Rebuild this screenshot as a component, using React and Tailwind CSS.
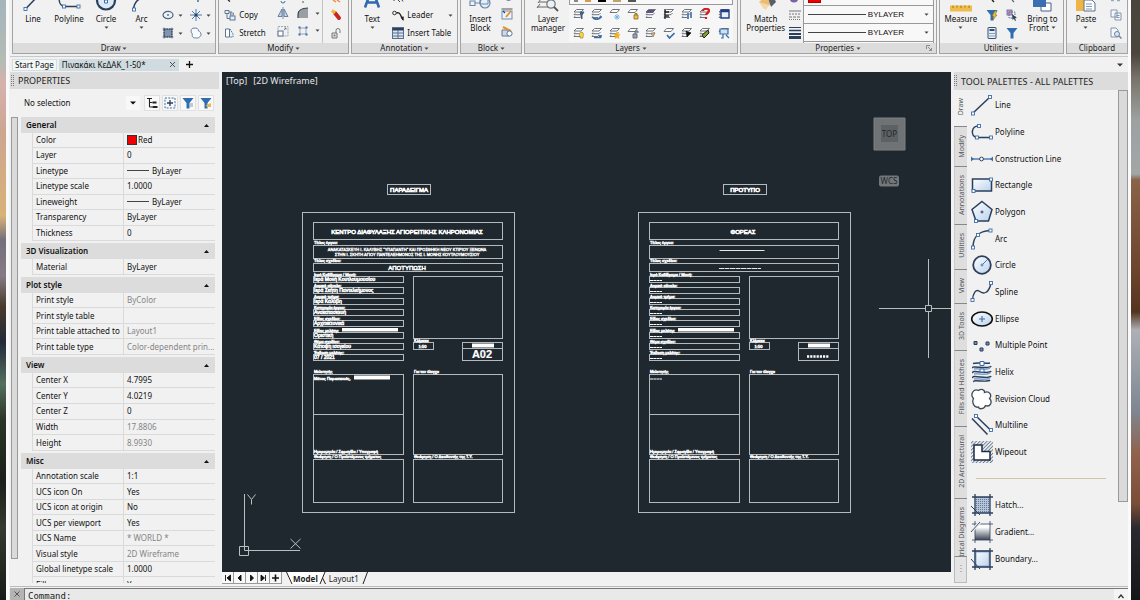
import React from 'react';

/* ---------- small shared pieces ---------- */

const NAVY = '#2b3f5c';
const BLUE = '#3b6ea8';

function Svg({ w, h, box, className = '', children }) {
  return (
    <svg width={w} height={h} viewBox={box || `0 0 ${w} ${h}`} className={`shrink-0 ${className}`} fill="none" aria-hidden="true">
      {children}
    </svg>
  );
}

function Caret({ className = '' }) {
  return (
    <Svg w={5} h={3} className={className}>
      <path d="M0.5 0.5h4L2.5 2.7z" fill="#444" />
    </Svg>
  );
}

function Handle({ x, y, s = 3 }) {
  return <rect x={x - s / 2} y={y - s / 2} width={s} height={s} fill="#fff" stroke={BLUE} strokeWidth="0.9" />;
}

function Panel({ title, caret = true, launcher = false, children }) {
  return (
    <section className="flex min-w-0 flex-col border border-t-0 border-[#a3a3a3] bg-[#f1f1f1]">
      <div className="flex min-h-0 flex-1 overflow-hidden">{children}</div>
      <button type="button" className="relative flex h-[10px] items-center justify-center gap-0.5 bg-[#dcdcdc] text-[8px] leading-[10px] text-[#222]">
        {title}
        {caret && <Caret />}
        {launcher && (
          <Svg w={6} h={6} className="absolute right-1 top-0.5">
            <path d="M0.5 4V0.5H4M2 2l3 3M5.5 3v2.5H3" stroke="#777" strokeWidth="0.8" />
          </Svg>
        )}
      </button>
    </section>
  );
}

function Big({ label, label2, caret, inlineCaret, className = '', children }) {
  return (
    <button type="button" className={`flex shrink-0 flex-col items-center text-[8px] leading-[9px] text-[#111] ${className}`}>
      <span className="flex h-[14px] items-start">{children}</span>
      <span className="whitespace-nowrap">{label}</span>
      {label2 && (
        <span className="flex items-center gap-0.5 whitespace-nowrap">
          {label2}
          {inlineCaret && <Caret />}
        </span>
      )}
      {caret && <Caret className="mt-[3px]" />}
    </button>
  );
}

function Tool({ name, children, className = '' }) {
  return (
    <button type="button" aria-label={name} className={`flex shrink-0 items-center justify-center ${className}`}>
      {children}
    </button>
  );
}

/* ---------- ribbon ---------- */

function DrawPanel() {
  return (
    <Panel title="Draw">
      <Big label="Line" className="w-[38px] pl-0.5">
        <Svg w={24} h={12}>
          <path d="M5 8.5L16 -3" stroke={NAVY} strokeWidth="1.5" />
          <Handle x={4.5} y={9} />
        </Svg>
      </Big>
      <Big label="Polyline" className="w-[36px]">
        <Svg w={26} h={12}>
          <path d="M3 -2C3 4 6 6.5 9 6.5H22" stroke={NAVY} strokeWidth="1.4" />
          <Handle x={8} y={6.5} />
          <Handle x={22.5} y={6.5} />
        </Svg>
      </Big>
      <Big label="Circle" caret className="w-[38px]">
        <Svg w={24} h={12}>
          <circle cx="12" cy="0.5" r="9" fill="#dbe8f6" stroke={NAVY} strokeWidth="2.2" />
          <path d="M10.5 0h3v3h-3z" fill="#fff" stroke={BLUE} />
        </Svg>
      </Big>
      <Big label="Arc" caret className="w-[33px]">
        <Svg w={20} h={12}>
          <path d="M1.5 9C2 5 4 1 7.5 -1" stroke={NAVY} strokeWidth="1.5" />
          <Handle x={2} y={9.5} />
        </Svg>
      </Big>
      <div className="grid flex-1 grid-cols-2 grid-rows-[6px_18px_18px] items-center">
        <span />
        <Svg w={6} h={4} className="ml-2 self-start">
          <path d="M2 1h2" stroke={BLUE} strokeWidth="1.5" />
        </Svg>
        <Tool name="Ellipse" className="gap-1">
          <Svg w={12} h={10}>
            <ellipse cx="6" cy="5" rx="5" ry="3.6" stroke="#4a6687" strokeWidth="1.2" />
            <circle cx="6" cy="5" r="0.9" fill={BLUE} />
          </Svg>
          <Caret />
        </Tool>
        <Tool name="Point" className="gap-1">
          <Svg w={12} h={12}>
            <path d="M6 0v12M0 6h12M2 2l8 8M10 2l-8 8" stroke={BLUE} strokeWidth="0.9" />
            <circle cx="6" cy="6" r="1.6" fill={NAVY} />
          </Svg>
          <Caret />
        </Tool>
        <Tool name="Hatch" className="gap-1">
          <Svg w={12} h={12}>
            <rect x="2" y="2" width="8" height="8" fill="#8295ad" stroke={NAVY} strokeDasharray="1.5 1" />
            <path d="M0.5 2h11M0.5 10h11M2 0.5v11M10 0.5v11" stroke={NAVY} strokeWidth="0.6" />
          </Svg>
          <Caret />
        </Tool>
        <Tool name="Revision cloud" className="gap-1">
          <Svg w={12} h={12}>
            <path d="M2.500 7C0 5 1 0.800 4 1.200C7 0.500 8.500 2 8.500 4C11.500 5 11.800 9 9.500 10C8 11.500 6 11 5.500 10.800C3 11.500 1.500 9 2.500 7Z" fill="#f8fafc" stroke="#6380a6" strokeWidth="1" />
          </Svg>
          <Caret />
        </Tool>
      </div>
    </Panel>
  );
}

function ModifyPanel() {
  return (
    <Panel title="Modify">
      <div className="grid w-[52px] shrink-0 grid-rows-[6px_18px_18px] text-[8px] leading-[10px] text-[#111]">
        <Svg w={8} h={3} className="ml-2">
          <path d="M1 0l2 1.500" stroke="#222" strokeWidth="1.2" />
        </Svg>
        <button type="button" className="flex items-center gap-[3px] pl-[5px]">
          <Svg w={12} h={12}>
            <path d="M1 1.500h4v3H1zM5 3h3M3 4.500v5h3" stroke="#5c7692" strokeWidth="1" />
            <rect x="6" y="7" width="5" height="4" fill="#e6eef8" stroke="#5c7692" />
            <rect x="6.500" y="4" width="3" height="2" stroke="#5c7692" strokeWidth="0.8" />
          </Svg>
          Copy
        </button>
        <button type="button" className="flex items-center gap-[3px] pl-[5px]">
          <Svg w={12} h={10}>
            <path d="M1.500 1h4v8h-4z" fill="#fff" stroke="#5c7692" />
            <path d="M6 1l3 5v3H6" stroke={BLUE} strokeDasharray="1.5 1" />
          </Svg>
          Stretch
        </button>
      </div>
      <div className="ml-0.5 grid w-[50px] shrink-0 grid-cols-[20px_20px_8px] grid-rows-[4px_18px_17px] items-center justify-items-center border-r border-[#c4c4c4]">
        <Svg w={6} h={3}><circle cx="3" cy="0" r="2" stroke={BLUE} /></Svg>
        <Svg w={6} h={3}><path d="M3 0v2" stroke="#555" /></Svg>
        <span />
        <Tool name="Mirror">
          <Svg w={12} h={12}>
            <path d="M5 2v7.500H1zM7 2v7.500h4z" fill="#c7d5e6" stroke="#61778f" strokeWidth="0.9" />
            <path d="M6 0v12" stroke={BLUE} strokeWidth="0.7" />
          </Svg>
        </Tool>
        <Tool name="Fillet">
          <Svg w={12} h={12}>
            <path d="M1 11V8C1 3 4 1 11 1V11Z" fill="#9a9fa5" />
            <path d="M1 11V8C1 3 4 1 11 1" stroke="#444" strokeWidth="1.2" />
          </Svg>
        </Tool>
        <Caret />
        <Tool name="Scale">
          <Svg w={12} h={12}>
            <rect x="1" y="1.500" width="10" height="9.500" stroke="#7f95ae" strokeWidth="0.8" strokeDasharray="2 1" />
            <rect x="1" y="6" width="5" height="5" fill="#fff" stroke="#5a6f88" />
            <path d="M7 5l2-2M7.500 3H9v1.500" stroke="#556" strokeWidth="0.7" />
          </Svg>
        </Tool>
        <Tool name="Array">
          <Svg w={12} h={12}>
            <path d="M3 3h6v6H3z" stroke="#8095b0" strokeWidth="0.8" />
            <path d="M1.500 1.500h2v2h-2zM8.500 1.500h2v2h-2zM1.500 8.500h2v2h-2zM8.500 8.500h2v2h-2z" fill={BLUE} />
          </Svg>
        </Tool>
        <Caret />
      </div>
      <div className="grid flex-1 grid-rows-[6px_18px_18px] items-center justify-items-center">
        <Svg w={12} h={4} className="self-start"><path d="M3 0l3 2M7 0l3 2" stroke="#ee8a3c" strokeWidth="1.4" /></Svg>
        <Tool name="Erase">
          <Svg w={12} h={12}>
            <path d="M5 4l4 5" stroke="#c8261d" strokeWidth="4" strokeLinecap="round" />
            <path d="M2 1.500l3 2.500" stroke="#f3b43a" strokeWidth="3.200" />
          </Svg>
        </Tool>
        <Tool name="Explode">
          <Svg w={12} h={12}>
            <path d="M2 6h5v5H2z" fill="#e2e2e2" stroke="#777" />
            <path d="M6 6V3.500a2 2 0 0 1 4 0V6" stroke="#777" />
            <circle cx="4.500" cy="8.500" r="1" fill="#777" />
          </Svg>
        </Tool>
      </div>
    </Panel>
  );
}

function AnnotationPanel() {
  return (
    <Panel title="Annotation">
      <Big label="Text" caret className="w-[40px]">
        <Svg w={18} h={8} box="0 0 18 8">
          <path d="M2 7.500L6.500 -5M16 7.500L11.500 -5M4 2.500h10" stroke="#2f69b1" strokeWidth="2.600" />
        </Svg>
      </Big>
      <div className="grid flex-1 grid-rows-[6px_18px_18px] text-[8px] leading-[10px] text-[#111]">
        <Svg w={14} h={3} className="ml-px"><path d="M1 0v1M5 0l2 2M9 0l1 1.500" stroke="#444" /></Svg>
        <div className="flex items-center justify-between pr-1">
          <button type="button" className="flex items-center gap-[3px]">
            <Svg w={12} h={11}>
              <circle cx="2.500" cy="3" r="1.800" stroke="#333" />
              <path d="M4.500 3C8 2 8 4 9 6L11 10" stroke="#222" strokeWidth="1.400" />
              <path d="M8.500 7L11.500 11L11.800 6.500Z" fill="#222" />
            </Svg>
            Leader
          </button>
          <Caret />
        </div>
        <button type="button" className="flex items-center gap-[3px] whitespace-nowrap">
          <Svg w={12} h={12}>
            <rect x="0.500" y="0.500" width="11" height="11" fill="#dbe6f3" stroke="#56708d" />
            <path d="M0.500 1h11v2.500H0.500z" fill={NAVY} />
            <path d="M0.500 6h11M0.500 9h11M6 3v8" stroke="#56708d" />
          </Svg>
          Insert Table
        </button>
      </div>
    </Panel>
  );
}

function BlockPanel() {
  return (
    <Panel title="Block">
      <Big label="Insert" label2="Block" className="w-[38px]">
        <Svg w={24} h={10}>
          <path d="M2 1h5v4.500H2zM7 3h6" stroke="#6a87ab" strokeWidth="1.100" />
          <circle cx="17" cy="3" r="5" fill="#e6eef8" stroke="#6a87ab" strokeWidth="1.200" />
          <path d="M12 -1h8v5h-8z" stroke="#6a87ab" />
        </Svg>
      </Big>
      <div className="grid flex-1 grid-rows-[5px_17px_17px] items-center justify-items-start pl-0.5">
        <Svg w={8} h={3} className="ml-1 self-start"><path d="M1 0a3 2 0 0 0 5 0" fill="#8a7aa0" /></Svg>
        <Tool name="Edit block">
          <Svg w={12} h={12}>
            <rect x="1" y="3" width="10" height="8" fill="#eef4fb" stroke="#6c8db5" />
            <path d="M0.500 1h11" stroke="#555" /><path d="M5 9l5-6" stroke="#e58f2c" strokeWidth="1.800" />
            <path d="M2 3l2 2" stroke="#27436b" strokeWidth="1.300" />
          </Svg>
        </Tool>
        <Tool name="Block attributes">
          <Svg w={12} h={12}>
            <path d="M1 5h7v6H1z" fill="#cfd8e4" stroke="#66788f" />
            <path d="M2 2l8 4" stroke="#e58f2c" strokeWidth="2" />
            <circle cx="8.500" cy="8.500" r="2.600" fill="#fff" stroke="#4d77ad" />
          </Svg>
        </Tool>
      </div>
    </Panel>
  );
}

const LAYER_TOOLS = [
  ['Freeze object layer', <path d="M7 4h4l-2 3v4l-1-1V7z" fill="#44607f" stroke="#44607f" />],
  ['Layer previous', <path d="M2 10c3 2 6 1 8-1l-1-1" stroke={BLUE} strokeWidth="1.800" />],
  ['Layer freeze', <path d="M8 6v6M5 9h6M6 7l4 4M10 7l-4 4" stroke="#6bb1e8" strokeWidth="0.9" />, true],
  ['Layer lock', <path d="M7 7h4v4H7zM8 7V5.500h2V7" fill="#f0bf4c" stroke="#8e6a1b" strokeWidth="0.8" />, true],
  ['Layer isolate', <path d="M3 2h7l-2 3H1z" fill="#5c5182" />],
  ['Layer walk', <path d="M2 1v10M2 4h4M2 8h4" stroke="#222" strokeWidth="1.300" />],
  ['Layer match', <path d="M6 5h2v6H6zM9 4h2v6H9z" fill="#5f86b5" />],
  ['Layer query', <path d="M4 3c0-3 6-3 6 0c0 2-3 2-3 4M7 9v2" stroke="#d81f1f" strokeWidth="2.200" />],
  ['Layer states', <path d="M3 2h8v8H3zM3 3.500h8" fill="#e8effa" stroke="#1f3c86" strokeWidth="1.400" />],
  ['Layer on', <path d="M8 5a2.500 2.500 0 0 1 2 4v2H7V9a2.500 2.500 0 0 1 1-4z" fill="#f7d64c" stroke="#a5872a" strokeWidth="0.7" />],
  ['Copy to layer', <path d="M3 10.500h7M10 10.500L7.500 8M10 10.500V8" stroke={BLUE} strokeWidth="1.600" />],
  ['Layer thaw', <path d="M8 5l1 2 2 .5-1.500 1.500.5 2.500-2-1-2 1 .5-2.500L5 7.500 7 7z" fill="#f2b21f" stroke="#f2b21f" strokeWidth="0.6" />],
  ['Layer unlock', <path d="M6 7h4v4H6zM8 7V4h3v2" fill="#9aa4b4" stroke="#5c6678" strokeWidth="0.9" />, true],
  ['Layer merge', <path d="M6 6h4l-2 4z" fill="#d6b88d" stroke="#887050" strokeWidth="0.700" />],
  ['Make current', <path d="M4 8l2.500 3 5-5" stroke={BLUE} strokeWidth="1.700" />, true],
  ['Layer off', <path d="M5 4l5 2-4 4z" fill="#111" stroke="#111" strokeWidth="0.6" />],
  ['Layer delete', <path d="M3 8l6-5 1 3-5 5z" fill="#7fa32e" stroke="#222" strokeWidth="1" />],
  ['Layer viewport', <path d="M2 2h8v5H2zM8 8l3 3M5 7v4H3" fill="#cfe0f3" stroke={BLUE} strokeWidth="1.200" />, true],
];

function LayersPanel() {
  return (
    <Panel title="Layers">
      <Big label="Layer" label2="manager" className="w-[44px] pl-px">
        <Svg w={24} h={12}>
          <path d="M3 2h12M1 7h11M5 -1L2 3M4 4L1 8" stroke="#666" strokeWidth="1" />
          <circle cx="15" cy="4" r="4.200" fill="#e9f1fa" stroke="#777" strokeWidth="1.200" />
          <path d="M18 7l4 4" stroke="#555" strokeWidth="1.800" />
        </Svg>
      </Big>
      <div className="mr-1 flex flex-1 flex-col">
        <div className="flex h-[5px] shrink-0 items-start gap-[7px] border border-t-0 border-[#999] bg-[#f8f8f8] pl-1">
          <span className="h-0.5 w-1 bg-[#888]" />
          <span className="h-0.5 w-1.5 bg-[#d99a4a]" />
          <span className="h-0.5 w-2 bg-black" />
          <span className="h-0.5 w-2 bg-[#bfa36a]" />
          <span className="h-0.5 w-2 bg-[#555]" />
        </div>
        <div className="grid h-[37px] grid-cols-9 grid-rows-2 items-center justify-items-center bg-[#f6f6f6]">
          {LAYER_TOOLS.map(([name, mark, single]) => (
            <Tool key={name} name={name}>
              <Svg w={12} h={12}>
                <path
                  d={single ? 'M3.500 1.500h7L8 4.500H1z' : 'M3.500 1.500h7L8 4H1zM2 5.500L1 6.700h7L9.500 5M2 8.200L1 9.500h6'}
                  fill="#fff"
                  stroke="#5f656d"
                  strokeWidth="0.900"
                />
                {mark}
              </Svg>
            </Tool>
          ))}
        </div>
      </div>
    </Panel>
  );
}

function LineSelect({ name }) {
  return (
    <div className="flex h-[18px] items-center border-b border-[#999] pl-1 pr-1">
      <span className="mr-0.5 h-px flex-1 bg-[#444]" />
      <select aria-label={name} className="h-3.5 w-14 appearance-none bg-transparent font-['Liberation_Sans',sans-serif] text-[8px] leading-[14px] text-[#111]">
        <option>BYLAYER</option>
      </select>
      <Caret />
    </div>
  );
}

function PropertiesPanel() {
  return (
    <Panel title="Properties" launcher>
      <Big label="Match" label2="Properties" className="w-[48px] pl-0.5">
        <Svg w={22} h={12}>
          <path d="M4 2L10 -3L17 3L11 8Z" fill="#e9bd78" />
          <path d="M4 2L8 8L11 10L14 5Z" fill="#f4d9a8" />
          <path d="M13 -2h6l2 4-5 5z" fill="#59606a" />
        </Svg>
      </Big>
      <div className="grid w-[14px] shrink-0 grid-rows-[6px_18px_18px] items-center">
        <Svg w={12} h={4} className="self-start"><circle cx="5" cy="-2" r="4.500" fill="#7d62a5" /></Svg>
        <Svg w={12} h={10}>
          <path d="M0 1h12" stroke="#777" /><path d="M0 4h12" stroke="#777" strokeDasharray="2 1" /><path d="M0 7h12" stroke="#777" strokeDasharray="3 1" /><path d="M0 9.500h12" stroke="#777" strokeDasharray="1 1" />
        </Svg>
        <Svg w={12} h={12}>
          <path d="M0 0.500h12" stroke={NAVY} /><path d="M0 3.500h12" stroke={NAVY} strokeWidth="1.500" /><path d="M0 7h12" stroke={NAVY} strokeWidth="2" /><path d="M0 10.500h12" stroke={NAVY} strokeWidth="3" />
        </Svg>
      </div>
      <div className="mr-0.5 min-w-0 flex-1 border-x border-[#999] bg-[#f8f8f8]">
        <div className="flex h-1.5 items-start border-b border-[#999] pl-1">
          <span className="h-[3px] w-[13px] border border-t-0 border-[#a00] bg-[#f00000]" />
        </div>
        <LineSelect name="Line type" />
        <LineSelect name="Line weight" />
      </div>
    </Panel>
  );
}

function Funnel({ children }) {
  return (
    <Svg w={12} h={12}>
      <path d="M0.500 1h11L7.500 6v5.500h-3V6z" fill="#2f6db0" />
      {children}
    </Svg>
  );
}

function UtilitiesPanel() {
  return (
    <Panel title="Utilities">
      <Big label="Measure" caret className="w-[42px]">
        <Svg w={24} h={12}>
          <rect x="1" y="5.500" width="22" height="6" fill="#f0bc4b" />
          <path d="M4 5.500v2.500M8 5.500v2M12 5.500v2.500M16 5.500v2M20 5.500v2.500" stroke="#8d671a" strokeWidth="0.800" />
        </Svg>
      </Big>
      <div className="grid w-[40px] shrink-0 grid-cols-2 grid-rows-[5px_19px_18px] items-center justify-items-center">
        <Svg w={6} h={3} className="self-start"><path d="M3 0l2 2" stroke="#222" strokeWidth="1.500" /></Svg>
        <Svg w={6} h={3} className="self-start"><path d="M3 0l2 2" stroke="#667" strokeWidth="1.300" /></Svg>
        <Tool name="Quick select"><Funnel><path d="M9 2L6 7h2l-1 4 4-5H9l2-4z" fill="#f4c63a" stroke="#8a6d1c" strokeWidth="0.600" /></Funnel></Tool>
        <Tool name="Select similar">
          <Svg w={12} h={12}>
            <rect x="1" y="1" width="5" height="5" fill="#e48aa8" stroke="#4a6fa5" strokeWidth="0.800" />
            <rect x="3" y="3" width="6" height="6" stroke="#4a6fa5" strokeDasharray="1.500 1" />
            <path d="M6 5l5 4-2 .3 1 2.200-1 .5-1-2.200L6.500 11z" fill="#345" />
          </Svg>
        </Tool>
        <Tool name="Calculator">
          <Svg w={10} h={12}>
            <rect x="1" y="0.500" width="8" height="11" rx="0.500" fill="#e6eef8" stroke="#334f73" />
            <path d="M2.500 3h5" stroke="#334f73" strokeWidth="2" /><path d="M2.500 6.500h5M2.500 9h5" stroke="#334f73" strokeDasharray="1 1" />
          </Svg>
        </Tool>
        <Tool name="Filter"><Funnel /></Tool>
      </div>
      <Big label="Bring to" label2="Front" inlineCaret className="flex-1">
        <Svg w={22} h={12}>
          <path d="M10 3h10v8H10z" fill="#fff" stroke="#44628a" />
          <path d="M2 -2h13v9H2z" fill="#3a6eb4" />
        </Svg>
      </Big>
    </Panel>
  );
}

function ClipboardPanel() {
  return (
    <Panel title="Clipboard" caret={false}>
      <Big label="Paste" caret className="w-[38px]">
        <Svg w={22} h={12}>
          <path d="M1 -2h12v13H1z" fill="#efb544" />
          <path d="M9 0h8l3 3v8H9z" fill="#fff" stroke="#5c6f88" />
          <path d="M11 4h6M11 6.500h6M11 9h6" stroke="#6f8fb7" strokeWidth="0.900" />
        </Svg>
      </Big>
      <div className="grid flex-1 grid-rows-[6px_18px_18px] items-center justify-items-center">
        <Svg w={12} h={3} className="self-start"><path d="M1 0.500h3M7 0.500h3" stroke="#9ab" strokeWidth="1.500" /></Svg>
        <Tool name="Copy clip">
          <Svg w={12} h={12}>
            <path d="M1 1h6v7H1zM5 4h6v7H5z" fill="#f5f8fc" stroke="#8396ae" /><path d="M6.500 6.500h3M6.500 8.500h3" stroke="#8396ae" />
          </Svg>
        </Tool>
        <Tool name="Match clip">
          <Svg w={12} h={12}>
            <path d="M1 1h5l2 2v7H1z" fill="#f5f8fc" stroke="#8396ae" /><circle cx="7" cy="7" r="2.500" fill="#dde8f4" stroke="#6c829e" /><path d="M9 9l2.500 2.500" stroke="#6c829e" strokeWidth="1.500" />
          </Svg>
        </Tool>
      </div>
    </Panel>
  );
}

function Ribbon() {
  return (
    <header className="grid h-[57px] shrink-0 grid-cols-[204fr_131fr_107fr_62fr_213fr_197fr_125fr_62fr] gap-0.5 border-b border-[#c8c8c8] pb-[2px] pl-0.5">
      <DrawPanel />
      <ModifyPanel />
      <AnnotationPanel />
      <BlockPanel />
      <LayersPanel />
      <PropertiesPanel />
      <UtilitiesPanel />
      <ClipboardPanel />
    </header>
  );
}

function FileTabs() {
  return (
    <nav className="flex h-[15px] shrink-0 items-center pl-0.5 text-[8px] leading-[10px] text-[#111]">
      <button type="button" className="mr-0.5 flex h-3 items-center border border-[#cfe0e6] bg-[#f2f6f7] px-0.5 whitespace-nowrap">Start Page</button>
      <div className="flex h-3 w-[120px] items-center justify-between bg-[#cfdbdf] pl-[3px] pr-1">
        <button type="button" className="whitespace-nowrap">Πινακάκι ΚεΔΑΚ_1-50*</button>
        <button type="button" aria-label="Close">
          <Svg w={5} h={5}><path d="M0 0l5 5M5 0L0 5" stroke="#444" strokeWidth="0.900" /></Svg>
        </button>
      </div>
      <button type="button" aria-label="New drawing" className="ml-[7px]">
        <Svg w={7} h={7}><path d="M3.500 0v7M0 3.500h7" stroke="#111" strokeWidth="1.300" /></Svg>
      </button>
      <button type="button" aria-label="All drawings" className="ml-auto mr-[5px]">
        <Svg w={6} h={4}><path d="M0 0.500h6L3 3.500z" fill="#333" /></Svg>
      </button>
    </nav>
  );
}

/* ---------- properties palette ---------- */

const SECTIONS = [
  { title: 'General', height: 'h-[108px]', rows: [
    ['Color', 'Red', 'swatch'], ['Layer', '0'], ['Linetype', 'ByLayer', 'line'], ['Linetype scale', '1.0000'],
    ['Lineweight', 'ByLayer', 'line'], ['Transparency', 'ByLayer'], ['Thickness', '0']] },
  { title: '3D Visualization', height: 'h-4', rows: [['Material', 'ByLayer']] },
  { title: 'Plot style', height: 'h-[62px]', rows: [
    ['Print style', 'ByColor', 'dim'], ['Print style table', ''], ['Print table attached to', 'Layout1', 'dim'],
    ['Print table type', 'Color-dependent prin...', 'dim']] },
  { title: 'View', height: 'h-[78px]', rows: [
    ['Center X', '4.7995'], ['Center Y', '4.0219'], ['Center Z', '0'], ['Width', '17.8806', 'dim'], ['Height', '8.9930', 'dim']] },
  { title: 'Misc', height: 'h-[124px]', rows: [
    ['Annotation scale', '1:1'], ['UCS icon On', 'Yes'], ['UCS icon at origin', 'No'], ['UCS per viewport', 'Yes'],
    ['UCS Name', '* WORLD *', 'dim'], ['Visual style', '2D Wireframe', 'dim'], ['Global linetype scale', '1.0000'], ['Fill', 'Yes']] },
];

function Grip() {
  return (
    <Svg w={4} h={12}>
      <path d="M0.500 0v12M2.500 0v12" stroke="#777" strokeDasharray="1 1" />
    </Svg>
  );
}

function PropertiesPalette() {
  return (
    <aside className="flex w-[212px] shrink-0 flex-col">
      <h2 className="mr-[3px] flex h-[17px] shrink-0 items-center gap-[3px] bg-[#dcdcdc] pl-px text-[9px] leading-[11px] text-[#222]">
        <Grip />
        PROPERTIES
      </h2>
      <div className="flex h-7 shrink-0 items-center pl-3.5 pr-2">
        <select aria-label="Selection" className="h-3.5 min-w-0 flex-1 appearance-none bg-transparent text-[8px] leading-[14px] text-[#111]">
          <option>No selection</option>
        </select>
        <span className="flex size-3.5 items-center justify-center bg-[#f8f8f8]">
          <Svg w={6} h={4}><path d="M0 0.500h6L3 3.500z" fill="#111" /></Svg>
        </span>
        <div className="ml-1 flex gap-0.5">
          <Tool name="Toggle tree" className="size-4 border border-[#e0e0e0] bg-[#f8f8f8]">
            <Svg w={12} h={12}><path d="M1 1.500h5M3.500 1.500v8.500M3.500 5.500h3M3.500 10h3" stroke="#222" strokeWidth="1.100" /><path d="M6.500 5.500h4M6.500 10h5" stroke="#222" strokeWidth="2" /></Svg>
          </Tool>
          <Tool name="Select objects" className="size-4 border border-[#e0e0e0] bg-[#f8f8f8]">
            <Svg w={12} h={12}><rect x="1" y="1" width="10" height="10" stroke={BLUE} strokeDasharray="2 1.300" /><path d="M6 3v6M3 6h6" stroke={NAVY} strokeWidth="1.300" /></Svg>
          </Tool>
          <Tool name="Quick select" className="size-4 border border-[#e0e0e0] bg-[#f8f8f8]">
            <Funnel><path d="M8 7h3M8 9h3" stroke="#8a9cb0" /></Funnel>
          </Tool>
          <Tool name="Filter selection" className="size-4 border border-[#e0e0e0] bg-[#f8f8f8]">
            <Funnel><path d="M6 8l5-2v4H7z" fill="#eab64b" /></Funnel>
          </Tool>
        </div>
      </div>
      <div className="mb-[3px] flex min-h-0 flex-1 pr-[7px]">
        <div className="mb-6 ml-px mr-[3px] w-[7px] shrink-0 border border-[#999] bg-[#dadada]" />
        <div className="flex min-w-0 flex-1 flex-col gap-0.5 overflow-hidden text-[8px] leading-[10px] text-[#111]">
          {SECTIONS.map((s) => (
            <section key={s.title} className="shrink-0">
              <button type="button" className="flex h-4 w-full items-center justify-between bg-[#dcdcdc] pl-[5px] pr-1.5 font-semibold">
                {s.title}
                <Svg w={5} h={3}><path d="M0 3L2.500 0L5 3z" fill="#111" /></Svg>
              </button>
              <div className="pl-[11px]">
                <table className={`w-full table-fixed border-collapse ${s.height}`}>
                  <tbody>
                    {s.rows.map(([k, v, kind]) => (
                      <tr key={k} className="border-b border-l border-[#dadada]">
                        <th scope="row" className="w-[91px] p-0 pl-[3px] text-left font-normal whitespace-nowrap">{k}</th>
                        <td className={`border-l border-[#dadada] p-0 pl-[3px] ${kind === 'dim' ? 'text-[#858585]' : ''}`}>
                          <span className="flex items-center whitespace-nowrap">
                            {kind === 'swatch' && <span className="mr-px size-[10px] border border-[#333] bg-[#f00000]" />}
                            {kind === 'line' && <span className="mr-[3px] h-px w-[22px] bg-[#444]" />}
                            {v}
                          </span>
                        </td>
                      </tr>
                    ))}
                  </tbody>
                </table>
              </div>
            </section>
          ))}
        </div>
      </div>
    </aside>
  );
}

/* ---------- drawing area ---------- */

const FIELDS = [
  ['Ιερό Καθίδρυμα / Μονή:', 'Ιερά Μονή Κουτλουμουσίου'],
  ['Δομικό σύνολο:', 'Ιερά Σκήτη Παντελεήμονος'],
  ['Δομικό τμήμα:', 'Ιερά Καλύβη'],
  ['Κατηγορία έργου:', 'Ανακατασκευή'],
  ['Είδος σχεδίου:', 'Αρχιτεκτονικά'],
  ['Είδος μελέτης', 'Οριστική'],
  ['Θέμα σχεδίου:', 'Κάτοψη ισογείου'],
  ['Έκδοση μελέτης:', '07 / 2021'],
];

function Box({ x, y, w, h }) {
  return <rect x={x + 0.5} y={y + 0.5} width={w} height={h} />;
}

function T({ x, y, size = 4, mid, sw = 0.5, bold, children }) {
  return (
    <text x={x} y={y} fontSize={size} fontWeight={bold ? 700 : 400} textAnchor={mid ? 'middle' : 'start'} fill="#fff" stroke="#fff" strokeWidth={sw}>
      {children}
    </text>
  );
}

function Sheet({ dx, filled, name, org }) {
  return (
    <g transform={`translate(${dx} 0)`}>
      <g stroke="#b4b9bd" strokeWidth="1">
        <Box x={387} y={184} w={43} h={10} />
        <Box x={302} y={212} w={212} h={300} />
        <Box x={313} y={222} w={189} h={17} />
        <Box x={313} y={245} w={189} h={13} />
        <Box x={313} y={263} w={189} h={8} />
        {FIELDS.map((f, i) => <Box key={f[0]} x={313} y={Math.round(276 + i * 11.1)} w={90} h={6} />)}
        <Box x={413} y={276} w={89} h={62} />
        <Box x={413} y={342} w={20} h={7} />
        <Box x={462} y={342} w={40} h={18} />
        <path d="M462.500 348.500h40M313.500 414.500h90" />
        <Box x={313} y={374} w={90} h={80} />
        <Box x={413} y={374} w={89} h={80} />
        <Box x={313} y={459} w={90} h={43} />
        <Box x={413} y={459} w={89} h={43} />
      </g>
      <T x={409} y={191.500} size={6} mid sw={0.7}>{name}</T>
      <T x={407} y={233.500} size={6} mid sw={0.6}>{org}</T>
      <T x={314} y={244}>Τίτλος έργου:</T>
      <T x={314} y={262}>Τίτλος σχεδίου:</T>
      {filled ? (
        <>
          <T x={407} y={251} mid sw={0.35}>ΑΝΑΚΑΤΑΣΚΕΥΗ Ι. ΚΑΛΥΒΗΣ "ΥΠΑΠΑΝΤΗ" ΚΑΙ ΠΡΟΣΘΗΚΗ ΝΕΟΥ ΚΤΙΡΙΟΥ ΞΕΝΩΝΑ</T>
          <T x={407} y={255.500} mid sw={0.35}>ΣΤΗΝ Ι. ΣΚΗΤΗ ΑΓΙΟΥ ΠΑΝΤΕΛΕΗΜΟΝΟΣ ΤΗΣ Ι. ΜΟΝΗΣ ΚΟΥΤΛΟΥΜΟΥΣΙΟΥ</T>
          <T x={407} y={269.500} size={6} mid sw={0.5}>ΑΠΟΤΥΠΩΣΗ</T>
          <T x={482} y={358} size={11} mid bold sw={0.2}>A02</T>
          <T x={314} y={379.500}>Μάνος Παρασκευάς,</T>
          <path d="M354 377.500h36" stroke="#fff" strokeWidth="4" />
        </>
      ) : (
        <>
          <path d="M383.500 250.500h45" stroke="#e6e8ea" />
          <path d="M383 268.500h42" stroke="#e6e8ea" strokeDasharray="5 0.500" />
          <path d="M471 356.500h22" stroke="#fff" strokeWidth="2.500" strokeDasharray="2.200 1" />
          <path d="M314 379h12" stroke="#fff" strokeDasharray="3 0.300" />
        </>
      )}
      {FIELDS.map(([label, value], i) => {
        const y = Math.round(276 + i * 11.1);
        return (
          <g key={label}>
            <T x={314} y={y - 0.500}>{label}</T>
            {filled ? <T x={314} y={y + 5.200} size={5}>{value}</T> : <path d={`M314 ${y + 4.500}h12`} stroke="#fff" strokeDasharray="3 0.300" />}
          </g>
        );
      })}
      <path d="M342 329.800h56" stroke="#fff" strokeWidth="3.500" />
      <path d="M472 345.500h22" stroke="#fff" strokeWidth="4" />
      <T x={414} y={341.500}>Κλίμακα</T>
      <T x={422.500} y={347.500} mid>1:50</T>
      <T x={314} y={373}>Μελετητής</T>
      <T x={414} y={373}>Για τον έλεγχο</T>
      <T x={314} y={452.500}>Ημερομηνία / Σφραγίδα / Υπογραφή</T>
      <T x={314} y={458}>Θεώρηση / Ο Προϊστάμενος τμήματος</T>
      <T x={414} y={458}>Θεώρηση / Ο Διευθυντής της Τ.Υ.</T>
    </g>
  );
}

function Canvas() {
  return (
    <div className="relative min-h-0 flex-1 bg-[#20282f]">
      <svg className="size-full" viewBox="222 72 729 500" fill="none" fontFamily="'Liberation Sans', Arial, sans-serif" role="img" aria-label="Title block drawing">
        <Sheet dx={0} filled name="ΠΑΡΑΔΕΙΓΜΑ" org="ΚΕΝΤΡΟ ΔΙΑΦΥΛΑΞΗΣ ΑΓΙΟΡΕΙΤΙΚΗΣ ΚΛΗΡΟΝΟΜΙΑΣ" />
        <Sheet dx={336} name="ΠΡΟΤΥΠΟ" org="ΦΟΡΕΑΣ" />
        <g stroke="#b9bec1">
          <path d="M244.500 494v56.500H300M239.500 546.500h9v9h-9z" />
          <path d="M247.500 494.500l4 5l4-5M251.500 499.500v5M290.500 539l10 9.500M300.500 539l-10 9.500" />
          <path d="M928.500 259v46.500M928.500 311.500V358M879 308.500h46.500M931.500 308.500H951M925.500 305.500h6v6h-6z" />
        </g>
        <path d="M874 118h31v32h-31z" fill="#6f7376" stroke="#7d8184" />
        <path d="M881 125h17v17h-17z" fill="#5c6164" />
        <text x="889.500" y="136.500" fontSize="8" textAnchor="middle" fill="#23292e" fontFamily="'Noto Sans', sans-serif">TOP</text>
        <rect x="879" y="175.500" width="20" height="11" rx="2" fill="#73777a" />
        <text x="889" y="184" fontSize="8" textAnchor="middle" fill="#20282f" fontFamily="'Noto Sans', sans-serif">WCS</text>
      </svg>
      <div className="absolute left-1 top-[3px] flex gap-1.5 text-[9px] leading-[11px] text-[#e4e6e8]">
        <button type="button">[Top]</button>
        <button type="button">[2D Wireframe]</button>
      </div>
    </div>
  );
}

const NAV = [
  ['First', 'M2.500 1v6M7.500 1v6L4 4z'],
  ['Previous', 'M6 1v6L3 4z'],
  ['Next', 'M3.500 1v6L6.500 4z'],
  ['Last', 'M6.500 1v6M2 1v6L5.500 4z'],
  ['Add', 'M4.500 0.500v7M1 4h7'],
];

function LayoutTabs() {
  return (
    <div className="flex h-3 shrink-0 items-stretch text-[8px] leading-[11px] text-[#222]">
      {NAV.map(([name, d]) => (
        <Tool key={name} name={name} className="w-3 border border-l-0 border-t-0 border-[#999] bg-[#f8f8f8]">
          <Svg w={9} h={8}><path d={d} fill="#111" stroke="#111" strokeWidth={name === 'Add' ? 1.600 : 0.900} /></Svg>
        </Tool>
      ))}
      <Svg w={7} h={12} className="ml-1"><path d="M0 0h7v12H5z" fill="#fff" /><path d="M0.500 0L6 12" stroke="#222" /></Svg>
      <button type="button" className="bg-white font-bold">Model</button>
      <Svg w={8} h={12}><path d="M0 0h7L2 12H0z" fill="#fff" /><path d="M7 0L2 12M4.500 6l3 6" stroke="#222" /></Svg>
      <button type="button" className="pl-[3px] pr-px">Layout1</button>
      <Svg w={8} h={12}><path d="M7.500 0L3 12" stroke="#222" /></Svg>
    </div>
  );
}

/* ---------- tool palettes ---------- */

const PALETTE_TABS = [
  ['Draw', 'flex-[37_37_0%]'],
  ['Modify', 'flex-[39_39_0%]'],
  ['Annotations', 'flex-[59_59_0%]'],
  ['Utilities', 'flex-[44_44_0%]'],
  ['View', 'flex-[34_34_0%]'],
  ['3D Tools', 'flex-[47_47_0%]'],
  ['Fills and Hatches', 'flex-[76_76_0%]'],
  ['2D Architectural', 'flex-[73_73_0%]'],
  ['Electrical Diagrams', 'flex-[58_58_0%]'],
];

function Frame() {
  return <path d="M5 1v22M20 1v22M2 4h21M2 20h21" stroke={NAVY} strokeWidth="1.300" />;
}

const TOOLS = [
  ['Line', <><path d="M3 20L20 4" stroke={NAVY} strokeWidth="1.500" /><Handle x={3} y={20.500} /><Handle x={20} y={4} /></>],
  ['Polyline', <><path d="M9 6C1 5 0 17 7 17.500H20" stroke={NAVY} strokeWidth="1.500" /><Handle x={9} y={6} /><Handle x={7} y={17.500} /><Handle x={21} y={17.500} /></>],
  ['Construction Line', <><path d="M2 12h20" stroke={BLUE} strokeWidth="1.300" /><path d="M1 9.500L4 12L1 14.500zM23 9.500L20 12L23 14.500z" fill={BLUE} /><circle cx="11.500" cy="12" r="1.900" fill="#fff" stroke={NAVY} /></>],
  ['Rectangle', <><rect x="2.500" y="6" width="19" height="12" fill="url(#sky)" stroke={NAVY} strokeWidth="1.500" /><Handle x={3.500} y={18} /><Handle x={21} y={6.500} /></>],
  ['Polygon', <><path d="M12 1.500L22 9.500L18.500 21H6L2 9.500Z" fill="url(#sky)" stroke={NAVY} strokeWidth="1.500" /><path d="M12 10.500v3M10.500 12h3" stroke={NAVY} /><Handle x={6} y={21} /></>],
  ['Arc', <><path d="M3 20C3 10 9 4 20 3.500" stroke={NAVY} strokeWidth="1.500" /><Handle x={3} y={20.500} /><Handle x={8} y={8} /><Handle x={20.500} y={3.500} /></>],
  ['Circle', <><circle cx="12" cy="12" r="8.800" fill="url(#sky)" stroke={NAVY} strokeWidth="1.800" /><path d="M12 10.500v3M10.500 12h3M13 11l5-5" stroke={BLUE} strokeWidth="0.900" /></>],
  ['Spline', <><path d="M2.500 20C3 13 6 9 9 11C14 15 19 13 21 3" stroke={NAVY} strokeWidth="1.400" /><Handle x={2.500} y={20} /><Handle x={21} y={3} /></>],
  ['Ellipse', <><ellipse cx="12" cy="12" rx="10.300" ry="7" fill="url(#sky)" stroke="#111" strokeWidth="1.600" /><path d="M12 9v6M9 12h6" stroke={BLUE} strokeWidth="1.100" /></>],
  ['Multiple Point', <path d="M4 8.500h3v3H4zM16 9h3v3h-3zM10 15h3v3h-3z" fill="#6f8fb5" stroke={NAVY} />],
  ['Helix', <><path d="M3 3.500C8 2 15 4 20 3M3 8C0 5 20 10 21 6M3 13C0 9 20 15 21 11M3 18C0 14 20 20 21 16M4 22C2 19 18 23 20 20" stroke={NAVY} strokeWidth="1.500" /><path d="M4 9c5-1 10 2 16-1M4 14c5-1 10 2 16-1M4 19c5-1 10 2 16-1" stroke="#7fa3d0" strokeWidth="1.500" /><path d="M10 1.500h4v4h-4zM10 9h4v3h-4z" fill="#fff" stroke={BLUE} /></>],
  ['Revision Cloud', <path d="M3.500 11.500C0 8 3 1 8.500 3.500C11 1.500 15 2.500 14.500 5.500C19 3.500 22.500 8 19.500 11.500C23 15 20 20.500 15.500 18.500C14 22.500 9 22.500 8.500 20C4.500 21.500 1.500 15.500 3.500 11.500Z" fill="#fff" stroke="#3d4957" strokeWidth="1.300" />],
  ['Multiline', <><path d="M2 5.500L17.500 21.500M6 3L20.500 17" stroke={NAVY} strokeWidth="1.500" /><Handle x={6} y={3} /><Handle x={21} y={17} /></>],
  ['Wipeout', <><path d="M1 1h22v22H1z" fill="url(#hatch)" /><path d="M4 5h8v6.500h8V20H4z" fill="#fff" stroke="#1c2c44" strokeWidth="1.500" /></>],
  null,
  ['Hatch...', <><path d="M5 4h15v16H5z" fill="#b8c5d8" /><path d="M5 4h15v16H5z" fill="url(#dots)" /><Frame /><path d="M1 13l9 9" stroke={NAVY} /></>],
  ['Gradient...', <><path d="M5 4h15v16H5z" fill="url(#dusk)" /><path d="M5 1v22M20 1v22M2 4h21M2 20h21" stroke={NAVY} strokeWidth="0.800" /><path d="M1 12L10 2" stroke="#e9eef5" strokeWidth="3" /><path d="M1 12L10 2" stroke="#555" /></>],
  ['Boundary...', <><path d="M5 4h15v16H5z" fill="url(#sky)" /><path d="M5.500 4.500h14v15h-14z" stroke="#8fa9cc" strokeWidth="2" /><Frame /><path d="M1 12l9 10" stroke={NAVY} /></>],
];

function ToolPalettes() {
  return (
    <aside className="flex w-[177px] shrink-0 flex-col">
      <svg width="0" height="0" className="absolute" aria-hidden="true">
        <defs>
          <linearGradient id="sky" x1="0" y1="0" x2="1" y2="1"><stop offset="0" stopColor="#fff" /><stop offset="1" stopColor="#b9d2ee" /></linearGradient>
          <linearGradient id="dusk" x1="0" y1="0" x2="0" y2="1"><stop offset="0.200" stopColor="#fff" /><stop offset="1" stopColor="#3c4556" /></linearGradient>
          <pattern id="hatch" width="2.500" height="2.500" patternUnits="userSpaceOnUse" patternTransform="rotate(45)"><path d="M0.500 0v3" stroke="#5c7290" strokeWidth="0.900" /></pattern>
          <pattern id="dots" width="2" height="2" patternUnits="userSpaceOnUse"><path d="M0 0h1v1H0z" fill="#5f7696" /></pattern>
        </defs>
      </svg>
      <h2 className="ml-[3px] flex h-[18px] shrink-0 items-center gap-[3px] bg-[#dcdcdc] text-[9px] leading-[11px] text-[#222]">
        <Grip />
        TOOL PALETTES - ALL PALETTES
      </h2>
      <div className="flex min-h-0 flex-1 pl-[3px]">
        <div className="mb-[3px] flex w-[13px] shrink-0 flex-col text-[7px] leading-[11px] text-[#555]">
          {PALETTE_TABS.map(([name, size], i) => (
            <button
              type="button"
              key={name}
              className={`flex min-h-0 flex-col items-center justify-start overflow-hidden border-b border-[#888] ${size} ${i === 0 ? 'bg-[#f1f1f1]' : 'border-l border-l-[#ccc] bg-[#dedede]'}`}
            >
              <span className="mt-2 rotate-180 whitespace-nowrap [writing-mode:vertical-rl]">{name}</span>
            </button>
          ))}
          <button type="button" aria-label="More palettes" className="flex h-[26px] shrink-0 items-center justify-center border border-t-0 border-[#bbb] bg-[#e4e4e4]">
            <Svg w={2} h={8}><path d="M1 0v8" stroke="#888" strokeDasharray="1 2" /></Svg>
          </button>
        </div>
        <div className="flex min-w-0 flex-1 flex-col pb-[14px] pl-[3px] pt-0.5 text-[8px] leading-[10px] text-[#111]">
          {TOOLS.map((t) =>
            t ? (
              <button type="button" key={t[0]} className="flex min-h-0 flex-1 items-center gap-px overflow-hidden text-left">
                <Svg w={24} h={24}>{t[1]}</Svg>
                {t[0]}
              </button>
            ) : (
              <div key="rule" className="flex min-h-0 flex-1 items-center pl-[6px] pr-3">
                <hr className="w-full border-[#cdc6a8]" />
              </div>
            )
          )}
        </div>
        <div className="flex w-[10px] shrink-0 flex-col">
          <div className="flex-[412_412_0%] border border-[#999] bg-[#dadada]" />
          <div className="flex-[84_84_0%]" />
        </div>
      </div>
    </aside>
  );
}

/* ---------- page ---------- */

function CommandLine() {
  return (
    <footer className="flex h-[14px] shrink-0 border-t border-[#bbb] pt-px">
      <button type="button" aria-label="Close command line" className="flex w-3.5 items-center justify-center bg-[#b4b4b4]">
        <Svg w={6} h={6}><path d="M0.500 0.500l5 5M5.500 0.500l-5 5" stroke="#555" /></Svg>
      </button>
      <label className="flex min-w-0 flex-1 items-center border-l border-t border-[#777] bg-[#e9e9e9] pl-[3px] pt-0.5 font-['DejaVu_Sans_Mono',monospace] text-[9px] leading-[10px] text-[#222]">
        Command:
        <input className="h-[10px] min-w-0 flex-1 bg-transparent outline-none" />
      </label>
      <button type="button" aria-label="Expand history" className="flex w-3.5 items-center justify-center border-t border-[#777] bg-[#f4f4f4] pt-1">
        <Svg w={6} h={5}><path d="M0.500 4L3 1l2.500 3" stroke="#333" strokeWidth="1.300" /></Svg>
      </button>
    </footer>
  );
}

export default function App() {
  return (
    <div className="flex h-screen overflow-hidden bg-[#f1f1f1] font-['Noto_Sans','Open_Sans',sans-serif]">
      <div className="w-1.5 shrink-0 bg-[linear-gradient(180deg,#a4b5bd_0%,#b3bcb4_10%,#d6b2ac_14%,#cda691_22%,#d8b276_36%,#73707c_40%,#857b84_46%,#4a3a2c_51%,#232a3a_57%,#55705f_64%,#2c3526_70%,#1b211b_80%,#353b30_88%,#171b17_100%)]" />
      <div className="flex min-w-0 flex-1 flex-col border-x-[3px] border-[#fafafa] pl-px">
        <Ribbon />
        <FileTabs />
        <main className="flex min-h-0 flex-1">
          <PropertiesPalette />
          <div className="mb-0.5 flex min-w-0 flex-1 flex-col">
            <Canvas />
            <LayoutTabs />
          </div>
          <ToolPalettes />
        </main>
        <CommandLine />
      </div>
      <div className="w-[9px] shrink-0 bg-[linear-gradient(180deg,#4a453c_0%,#4a463e_9%,#77736a_13%,#9da1a1_20%,#a3a6a6_29%,#8a6248_30%,#6d452d_45%,#54341f_52%,#aeb0b4_55%,#7f8894_68%,#90614a_76%,#7a4d38_84%,#2a2a2e_88%,#161618_100%)]" />
    </div>
  );
}
